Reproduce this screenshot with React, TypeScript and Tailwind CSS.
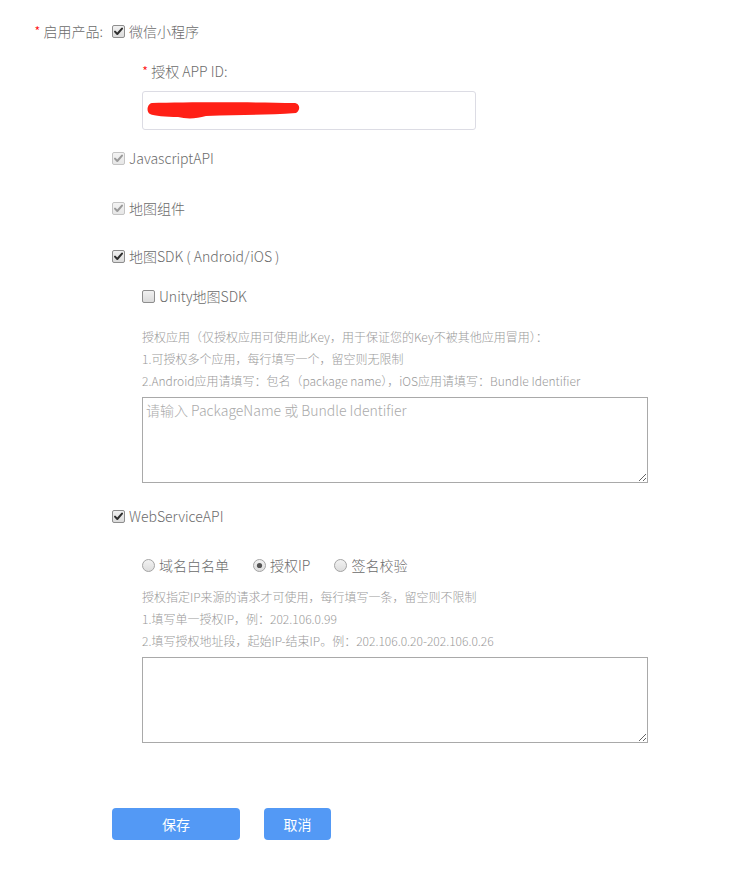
import { useState } from "react";

const FONT = '"Noto Sans CJK SC", "Noto Sans", sans-serif';

function CheckBox({ checked, disabled }: { checked: boolean; disabled?: boolean }) {
  const stroke = disabled ? "#c4c4c4" : "#8e8e8e";
  const tick = disabled ? "#9a9a9a" : "#2f2f2f";
  return (
    <svg width="13" height="13" viewBox="0 0 13 13" className="shrink-0">
      <defs>
        <linearGradient id={disabled ? "cbd" : "cbn"} x1="0" y1="0" x2="0" y2="1">
          <stop offset="0" stopColor={disabled ? "#f4f4f4" : "#f2f2f2"} />
          <stop offset="1" stopColor={disabled ? "#e6e6e6" : "#dadada"} />
        </linearGradient>
      </defs>
      <rect x="0.5" y="0.5" width="12" height="12" rx="1.5" fill={`url(#${disabled ? "cbd" : "cbn"})`} stroke={stroke} />
      {checked && <path d="M3 6.6 L5.3 9 L10 3.6" fill="none" stroke={tick} strokeWidth="2" strokeLinecap="round" strokeLinejoin="round" />}
    </svg>
  );
}

function Radio({ checked }: { checked: boolean }) {
  return (
    <svg width="13" height="13" viewBox="0 0 13 13" className="shrink-0">
      <defs>
        <linearGradient id="rg" x1="0" y1="0" x2="0" y2="1">
          <stop offset="0" stopColor="#f3f3f3" />
          <stop offset="1" stopColor="#dcdcdc" />
        </linearGradient>
      </defs>
      <circle cx="6.5" cy="6.5" r="6" fill="url(#rg)" stroke="#a4a4a4" />
      {checked && <circle cx="6.5" cy="6.5" r="2.6" fill="#555" />}
    </svg>
  );
}

function CheckRow({ label, checked, disabled }: { label: string; checked: boolean; disabled?: boolean }) {
  return (
    <div className="flex h-5 items-center gap-[4px] text-[14px] font-light text-[#6b6b6b]">
      <CheckBox checked={checked} disabled={disabled} />
      <span>{label}</span>
    </div>
  );
}

export default function App() {
  const [mode, setMode] = useState("ip");
  const modes = [
    { key: "domain", label: "域名白名单" },
    { key: "ip", label: "授权IP" },
    { key: "sign", label: "签名校验" },
  ];

  return (
    <div className="min-h-[887px] bg-white pt-[21px]" style={{ fontFamily: FONT }}>
      <div className="grid grid-cols-[112px_1fr]">
        <div className="flex h-5 items-center justify-end pr-[9px] text-[14px] font-light text-[#6b6b6b]">
          <span className="mr-[3px] text-[#f00]">*</span>启用产品:
        </div>
        <div>
          <CheckRow label="微信小程序" checked />

          <div className="pl-[30px]">
            <div className="mt-[20px] flex h-5 items-center text-[14px] font-light text-[#6b6b6b]">
              <span className="mr-[3px] text-[#f00]">*</span>授权 APP ID:
            </div>
            <div className="mt-[10px] flex h-[39px] w-[334px] items-center rounded-[3px] border border-[#dcdce4] px-[3px]">
              <svg width="155" height="20" viewBox="0 0 155 20">
                <path
                  d="M6 2 C40 1 110 1 148 2 C154 2 155 9 150 12 C120 14 95 14 60 15 C50 18 40 18 32 16 C20 16 8 15 4 13 C0 11 1 3 6 2 Z"
                  fill="#ff2016"
                />
              </svg>
            </div>
          </div>

          <div className="mt-[18px]">
            <CheckRow label="JavascriptAPI" checked disabled />
          </div>
          <div className="mt-[30px]">
            <CheckRow label="地图组件" checked disabled />
          </div>
          <div className="mt-[28px]">
            <CheckRow label="地图SDK ( Android/iOS )" checked />
          </div>

          <div className="pl-[30px]">
            <div className="mt-[20px]">
              <CheckRow label="Unity地图SDK" checked={false} />
            </div>
            <div className="mt-[20px] text-[12px] font-light leading-[22px] text-[#9a9a9a]">
              <p>授权应用（仅授权应用可使用此Key，用于保证您的Key不被其他应用冒用）：</p>
              <p>1.可授权多个应用，每行填写一个，留空则无限制</p>
              <p>2.Android应用请填写：包名（package name），iOS应用请填写：Bundle Identifier</p>
            </div>
            <textarea
              placeholder="请输入 PackageName 或 Bundle Identifier"
              className="mt-[5px] block h-[86px] w-[506px] border border-[#a9a9a9] px-[3px] py-[2px] text-[14px] font-light text-[#666] placeholder:text-[#aaa] focus:outline-none"
              style={{ fontFamily: FONT }}
            />
          </div>

          <div className="mt-[23px]">
            <CheckRow label="WebServiceAPI" checked />
          </div>

          <div className="pl-[30px]">
            <div className="mt-[29px] flex h-5 items-center text-[14px] font-light text-[#6b6b6b]">
              {modes.map((m) => (
                <label
                  key={m.key}
                  onClick={() => setMode(m.key)}
                  className="mr-[24px] flex cursor-pointer items-center gap-[4px]"
                >
                  <Radio checked={mode === m.key} />
                  <span>{m.label}</span>
                </label>
              ))}
            </div>
            <div className="mt-[11px] text-[12px] font-light leading-[22px] text-[#9a9a9a]">
              <p>授权指定IP来源的请求才可使用，每行填写一条，留空则不限制</p>
              <p>1.填写单一授权IP，例：202.106.0.99</p>
              <p>2.填写授权地址段，起始IP-结束IP。例：202.106.0.20-202.106.0.26</p>
            </div>
            <textarea
              className="mt-[5px] block h-[86px] w-[506px] border border-[#a9a9a9] px-[3px] py-[2px] text-[14px] text-[#666] focus:outline-none"
              style={{ fontFamily: FONT }}
            />
          </div>

          <div className="mt-[65px] flex gap-[24px]">
            <button type="button" className="h-[32px] w-[128px] rounded-[4px] bg-[#5399f5] text-[14px] text-white">
              保存
            </button>
            <button type="button" className="h-[32px] w-[67px] rounded-[4px] bg-[#5399f5] text-[14px] text-white">
              取消
            </button>
          </div>
        </div>
      </div>
    </div>
  );
}
